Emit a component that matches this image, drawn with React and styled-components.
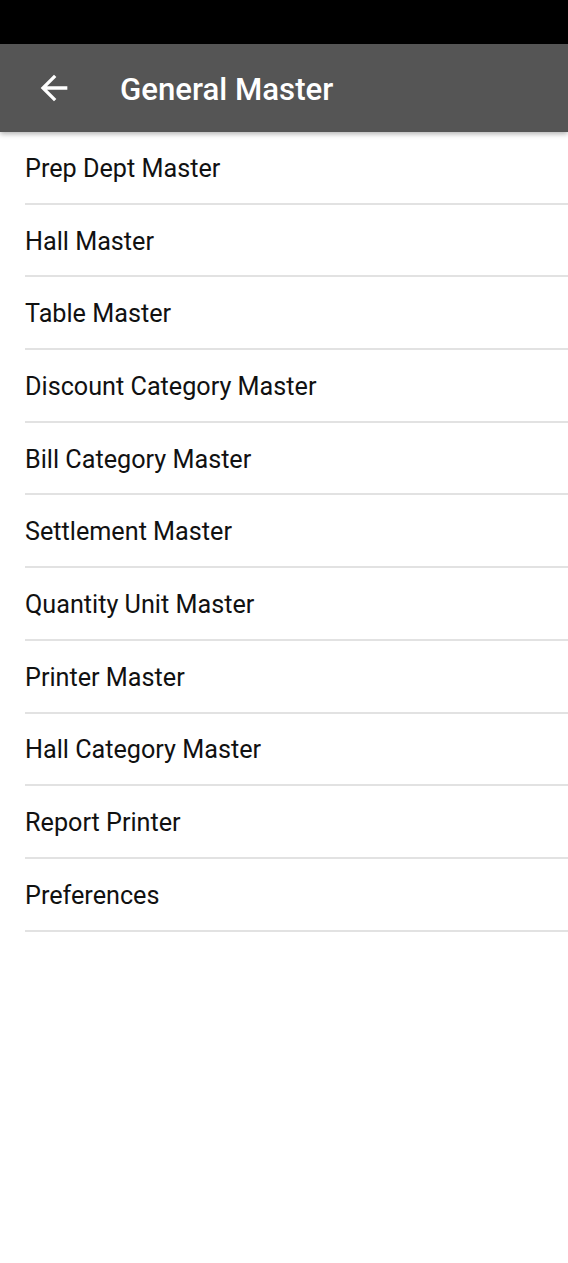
import styled, { createGlobalStyle } from "styled-components";

const GlobalStyle = createGlobalStyle`
  html, body {
    margin: 0;
    padding: 0;
    background: #fff;
  }
  body {
    font-family: Roboto, "Liberation Sans", sans-serif;
  }
`;

const Screen = styled.div`
  width: 568px;
  min-height: 1263px;
  background: #fff;
`;

const StatusBar = styled.div`
  height: 44px;
  background: #000;
`;

const AppBar = styled.header`
  height: 88px;
  display: flex;
  align-items: center;
  background: #555555;
  box-shadow: 0 2px 5px rgba(0, 0, 0, 0.3);
  position: relative;
  z-index: 1;
`;

const BackButton = styled.button`
  width: 40px;
  height: 40px;
  margin-left: 34px;
  padding: 0;
  border: none;
  background: none;
  display: flex;
  align-items: center;
  justify-content: center;
  color: #fff;
`;

const Title = styled.h1`
  margin: 0 0 0 46px;
  font-size: 31.2px;
  font-weight: 500;
  color: #fff;
  padding-top: 2px;
`;

const List = styled.ul`
  list-style: none;
  margin: 0;
  padding: 0 0 0 25px;
`;

const Item = styled.li`
  box-sizing: border-box;
  height: 72.7px;
  display: flex;
  align-items: center;
  border-bottom: 2px solid #e2e2e2;
  font-size: 25.2px;
  color: #111;
  padding-top: 2px;
`;

const items = [
  "Prep Dept Master",
  "Hall Master",
  "Table Master",
  "Discount Category Master",
  "Bill Category Master",
  "Settlement Master",
  "Quantity Unit Master",
  "Printer Master",
  "Hall Category Master",
  "Report Printer",
  "Preferences",
];

const ArrowBack = () => (
  <svg width="40" height="40" viewBox="0 0 24 24" fill="currentColor">
    <path d="M20 11H7.83l5.59-5.59L12 4l-8 8 8 8 1.41-1.41L7.83 13H20v-2z" />
  </svg>
);

export default function App() {
  return (
    <>
      <GlobalStyle />
      <Screen>
        <StatusBar />
        <AppBar>
          <BackButton aria-label="Back">
            <ArrowBack />
          </BackButton>
          <Title>General Master</Title>
        </AppBar>
        <List>
          {items.map((label) => (
            <Item key={label}>{label}</Item>
          ))}
        </List>
      </Screen>
    </>
  );
}
